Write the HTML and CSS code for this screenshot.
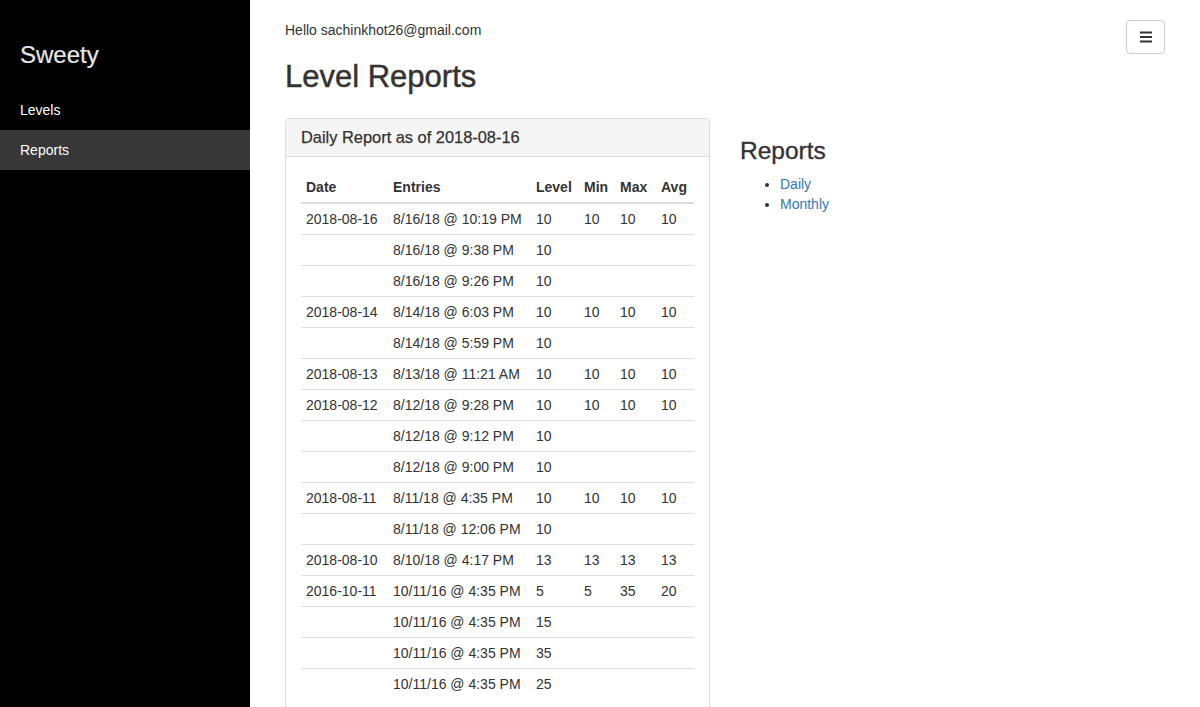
FILE: index.html
```html
<!DOCTYPE html>
<html lang="en">
<head>
<meta charset="utf-8">
<title>Level Reports</title>
<link rel="stylesheet" href="styles.css">
</head>
<body>
<div class="layout">
  <aside class="sidebar">
    <div class="brand">Sweety</div>
    <ul class="nav">
      <li><a href="#">Levels</a></li>
      <li class="active"><a href="#">Reports</a></li>
    </ul>
  </aside>
  <main class="main">
    <button class="toggle" type="button" aria-label="Menu">
      <svg width="12" height="12" viewBox="0 0 12 12"><rect x="0" y="0.5" width="12" height="2" fill="#333"/><rect x="0" y="5" width="12" height="2" fill="#333"/><rect x="0" y="9.5" width="12" height="2" fill="#333"/></svg>
    </button>
    <p class="hello">Hello sachinkhot26@gmail.com</p>
    <h1 class="title">Level Reports</h1>
    <div class="row">
      <div class="panel">
        <div class="panel-heading">Daily Report as of 2018-08-16</div>
        <div class="panel-body">
          <table class="table">
            <thead>
              <tr><th class="c-date">Date</th><th class="c-entries">Entries</th><th class="c-level">Level</th><th class="c-min">Min</th><th class="c-max">Max</th><th>Avg</th></tr>
            </thead>
            <tbody>
              <tr><td>2018-08-16</td><td>8/16/18 @ 10:19 PM</td><td>10</td><td>10</td><td>10</td><td>10</td></tr>
              <tr><td></td><td>8/16/18 @ 9:38 PM</td><td>10</td><td></td><td></td><td></td></tr>
              <tr><td></td><td>8/16/18 @ 9:26 PM</td><td>10</td><td></td><td></td><td></td></tr>
              <tr><td>2018-08-14</td><td>8/14/18 @ 6:03 PM</td><td>10</td><td>10</td><td>10</td><td>10</td></tr>
              <tr><td></td><td>8/14/18 @ 5:59 PM</td><td>10</td><td></td><td></td><td></td></tr>
              <tr><td>2018-08-13</td><td>8/13/18 @ 11:21 AM</td><td>10</td><td>10</td><td>10</td><td>10</td></tr>
              <tr><td>2018-08-12</td><td>8/12/18 @ 9:28 PM</td><td>10</td><td>10</td><td>10</td><td>10</td></tr>
              <tr><td></td><td>8/12/18 @ 9:12 PM</td><td>10</td><td></td><td></td><td></td></tr>
              <tr><td></td><td>8/12/18 @ 9:00 PM</td><td>10</td><td></td><td></td><td></td></tr>
              <tr><td>2018-08-11</td><td>8/11/18 @ 4:35 PM</td><td>10</td><td>10</td><td>10</td><td>10</td></tr>
              <tr><td></td><td>8/11/18 @ 12:06 PM</td><td>10</td><td></td><td></td><td></td></tr>
              <tr><td>2018-08-10</td><td>8/10/18 @ 4:17 PM</td><td>13</td><td>13</td><td>13</td><td>13</td></tr>
              <tr><td>2016-10-11</td><td>10/11/16 @ 4:35 PM</td><td>5</td><td>5</td><td>35</td><td>20</td></tr>
              <tr><td></td><td>10/11/16 @ 4:35 PM</td><td>15</td><td></td><td></td><td></td></tr>
              <tr><td></td><td>10/11/16 @ 4:35 PM</td><td>35</td><td></td><td></td><td></td></tr>
              <tr><td></td><td>10/11/16 @ 4:35 PM</td><td>25</td><td></td><td></td><td></td></tr>
            </tbody>
          </table>
        </div>
      </div>
      <div class="side">
        <h3 class="side-title">Reports</h3>
        <ul class="links">
          <li><a href="#">Daily</a></li>
          <li><a href="#">Monthly</a></li>
        </ul>
      </div>
    </div>
  </main>
</div>
</body>
</html>
```
FILE: styles.css
```css
* { box-sizing: border-box; }
html, body { margin: 0; padding: 0; }
body {
  font-family: "Liberation Sans", Arial, Helvetica, sans-serif;
  font-size: 14px;
  line-height: 20px;
  color: #333;
  background: #fff;
}
a { color: #337ab7; text-decoration: none; }

.layout {
  display: flex;
  min-height: 100vh;
}
.sidebar {
  width: 250px;
  flex: 0 0 250px;
  background: #000;
}
.brand {
  padding: 42px 20px 22px;
  font-size: 24px;
  line-height: 26px;
  color: #e6e6e6;
  -webkit-text-stroke: 0.2px #e6e6e6;
}
.nav {
  list-style: none;
  margin: 0;
  padding: 0;
}
.nav a {
  display: block;
  padding: 10px 20px;
  color: #fff;
}
.nav .active a { background: #373737; }

.main {
  position: relative;
  flex: 1;
  padding: 20px 35px 0;
}
.toggle {
  position: absolute;
  top: 20px;
  right: 35px;
  width: 39px;
  height: 34px;
  border: 1px solid #ccc;
  border-radius: 4px;
  background: #fff;
  padding: 0;
  display: flex;
  align-items: center;
  justify-content: center;
}
.toggle svg { display: block; }
.hello { margin: 0 0 10px; }
.title {
  margin: 20px 0 24px;
  font-size: 31px;
  line-height: 34px;
  font-weight: normal;
  -webkit-text-stroke: 0.45px #333;
}
.row {
  display: grid;
  grid-template-columns: 1fr 1fr;
  column-gap: 30px;
  align-items: start;
}
.panel {
  border: 1px solid #ddd;
  border-radius: 4px;
}
.panel-heading {
  background: #f5f5f5;
  border-bottom: 1px solid #ddd;
  border-radius: 3px 3px 0 0;
  padding: 10px 15px;
  font-size: 16.4px;
  line-height: 17px;
  -webkit-text-stroke: 0.25px #333;
}
.panel-body { padding: 15px; }
.table {
  width: 100%;
  border-collapse: collapse;
}
.table th, .table td {
  padding: 5px;
  text-align: left;
  vertical-align: top;
  line-height: 20px;
  white-space: nowrap;
}
.table th {
  font-weight: bold;
  border-bottom: 2px solid #ddd;
}
.c-date { width: 87px; }
.c-entries { width: 143px; }
.c-level { width: 48px; }
.c-min { width: 36px; }
.c-max { width: 41px; }
.table td { border-top: 1px solid #ddd; }
.table tbody tr:first-child td { border-top: 0; }

.side-title {
  margin: 20px 0 10px;
  font-size: 24.5px;
  line-height: 26px;
  font-weight: normal;
  -webkit-text-stroke: 0.35px #333;
}
.links {
  margin: 0 0 10px;
  padding-left: 40px;
}
```
